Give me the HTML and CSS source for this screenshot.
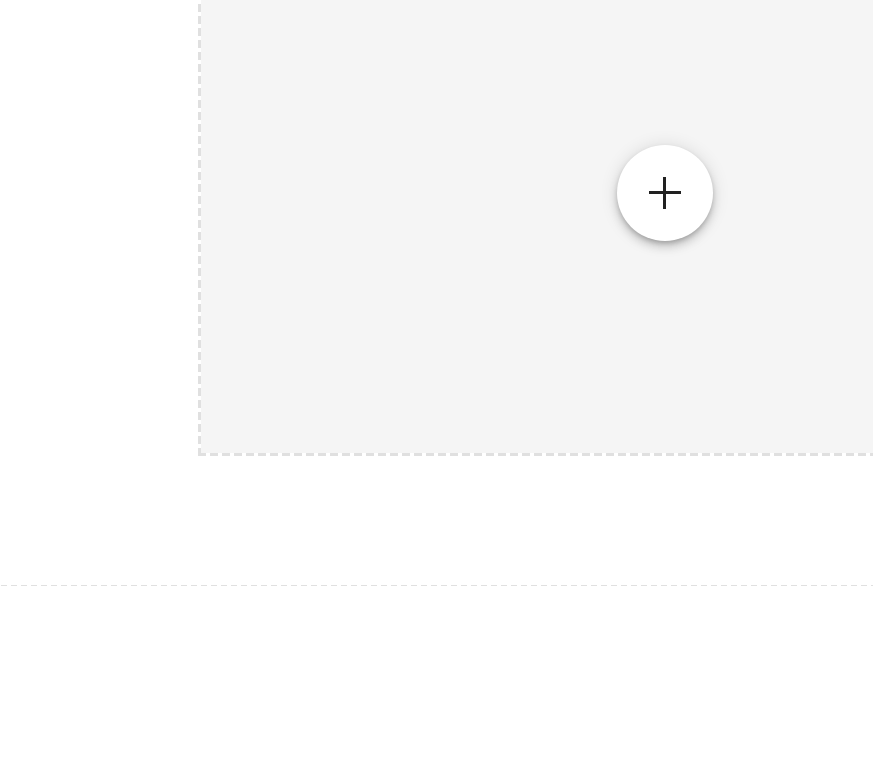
FILE: index.html
```html
<!DOCTYPE html>
<html lang="en">
<head>
    <meta charset="UTF-8">
    <meta name="viewport" content="width=device-width, initial-scale=1.0">
    <title>Board</title>
    <link rel="stylesheet" href="styles.css">
</head>
<body>
    <div class="page">
        <div class="drop-zone">
            <button class="add-button" aria-label="Add">
                <svg width="32" height="32" viewBox="0 0 32 32">
                    <path d="M15.5 0v32M0 15.5h32" stroke="#212121" stroke-width="3" fill="none"/>
                </svg>
            </button>
        </div>
        <div class="divider"></div>
    </div>
</body>
</html>
```

FILE: styles.css
```css
html, body {
    margin: 0;
    padding: 0;
    background: white;
    overflow: hidden;
    font-family: Roboto, sans-serif;
}
.page {
    width: 873px;
}
/* dashed edges drawn as gradients so the dash length matches */
.drop-zone {
    box-sizing: border-box;
    margin: -67px 0 0 198px;
    width: 931px;
    height: 523px;
    padding: 0 0 3px 3px;
    background:
        repeating-linear-gradient(to bottom, #e0e0e0 0 8px, white 8px 12px) 0 11px / 3px 100% no-repeat,
        repeating-linear-gradient(to right, #e0e0e0 0 8px, white 8px 12px) left bottom / 100% 3px no-repeat,
        #f5f5f5;
    display: flex;
    align-items: center;
    justify-content: center;
}
.add-button {
    width: 96px;
    height: 96px;
    border-radius: 50%;
    border: none;
    background: white;
    display: flex;
    align-items: center;
    justify-content: center;
    padding: 0;
    cursor: pointer;
    box-shadow: 0 3px 5px -1px rgba(0,0,0,0.2), 0 6px 10px 0 rgba(0,0,0,0.14), 0 1px 18px 0 rgba(0,0,0,0.12);
}
.divider {
    margin-top: 129px;
    height: 1px;
    background: repeating-linear-gradient(to right, white 0 1px, #e0e0e0 1px 7px, white 7px 10px);
}
```
